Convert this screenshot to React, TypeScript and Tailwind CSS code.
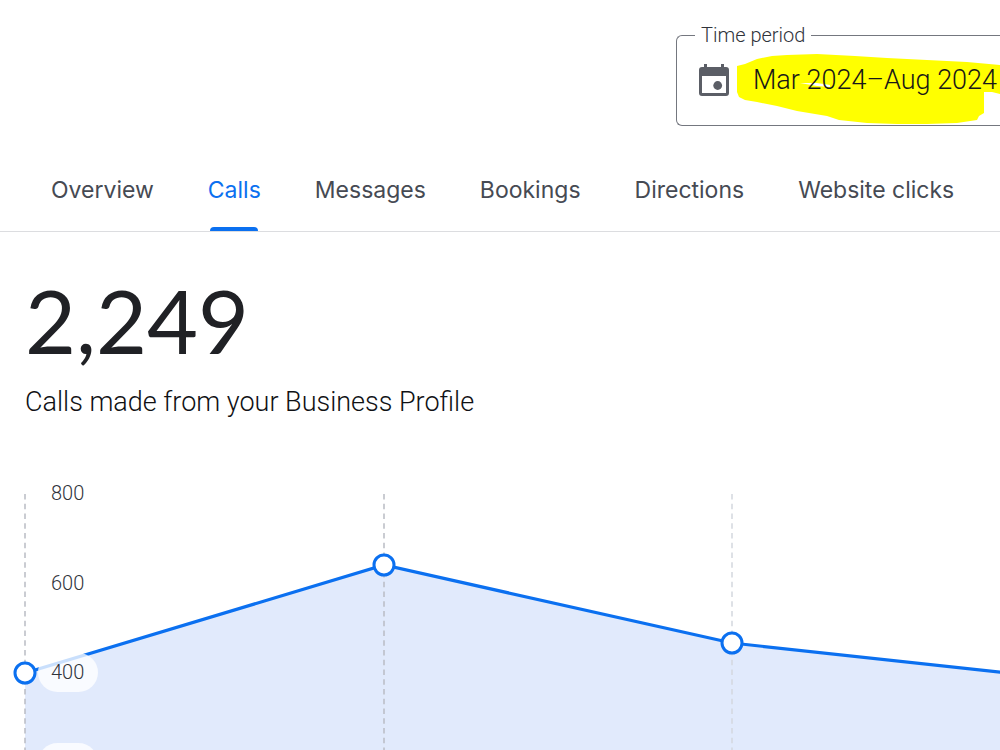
/**
 * Business Profile performance: calls view.
 *
 * Header with the time period picker, metric tabs, headline total and the
 * monthly calls chart.
 */
import { clsx } from "clsx"

interface Tab {
  label:   string
  active?: boolean
}

const TABS: Tab[] = [
  { label: "Overview" },
  { label: "Calls", active: true },
  { label: "Messages" },
  { label: "Bookings" },
  { label: "Directions" },
  { label: "Website clicks" },
]

function CalendarIcon() {
  return (
    <svg viewBox="0 0 30 34" className="h-[34px] w-[30px] shrink-0" aria-hidden="true">
      <path
        fill="#5b5e66"
        fillRule="evenodd"
        d="M5 1h3v3h14V1h3v3h2a3 3 0 0 1 3 3v23a3 3 0 0 1-3 3H3a3 3 0 0 1-3-3V7a3 3 0 0 1 3-3h2zM3 13v17h24V13z"
      />
      <circle cx="18.7" cy="22.5" r="4.4" fill="#5b5e66" />
    </svg>
  )
}

function Highlight() {
  return (
    <svg
      viewBox="0 0 263 70"
      className="pointer-events-none absolute left-[60px] top-[9px] h-[70px] w-[263px]"
      aria-hidden="true"
    >
      <path
        fill="#ffff00"
        d="M0 12 8 10 20 5 35 2 50 1 80 0 118 2 150 4 190 6 230 8 263 11V40L255 38 247 38 247 59 242 62 240 66 220 69 190 70 160 70 130 69 102 66 90 62 60 57 40 52 20 48 8 46 2 43 0 38z"
      />
      <path fill="#fff" d="M63 29 80 29 93 31 93 33 80 32z" />
    </svg>
  )
}

function TimePeriod() {
  return (
    <fieldset className="relative h-[101px] w-[324px] rounded-l-md border border-r-0 border-[#74777f] pl-[18px]">
      <legend className="px-1.5 text-[20px] leading-5 font-light text-[#30333b]">Time period</legend>
      <Highlight />
      <button
        type="button"
        className="relative flex items-center gap-6 whitespace-nowrap pl-1 pt-[18px] text-[27px] leading-8 font-light text-[#181818]"
      >
        <CalendarIcon />
        Mar 2024–Aug 2024
      </button>
    </fieldset>
  )
}

function MetricTabs() {
  return (
    <nav className="flex gap-[54px] overflow-hidden border-b border-[#dcdde0] pl-[51px]">
      {TABS.map((tab) => (
        <a
          key={tab.label}
          href="#"
          aria-current={tab.active ? "page" : undefined}
          className={clsx(
            "flex shrink-0 flex-col items-center font-['Inter'] text-[23px] leading-8",
            tab.active ? "text-[#0b70f0]" : "text-[#464a53]",
          )}
        >
          {tab.label}
          <span
            className={clsx(
              "mt-[21px] h-1 w-12 rounded-t",
              tab.active ? "bg-[#0b70f0]" : "bg-transparent",
            )}
          />
        </a>
      ))}
    </nav>
  )
}

// Chart coordinates, one point per month
const POINTS = [
  { x: 25,   y: 193, grid: "#b9bcc3" },
  { x: 384,  y: 85,  grid: "#b9bcc3" },
  { x: 732,  y: 163, grid: "#d3d7de" },
  { x: 1090, y: 202, grid: "#d3d7de" },
]

const AXIS = [
  { label: "800", y: 20 },
  { label: "600", y: 110 },
  { label: "400", y: 199 },
]

const LINE = POINTS.map((p) => `${p.x},${p.y}`).join(" ")

function CallsChart() {
  return (
    <svg
      viewBox="0 0 1000 270"
      className="block h-auto w-full"
      role="img"
      aria-label="Calls per month"
    >
      <polygon points={`25,270 ${LINE} 1090,270`} fill="#e1eafc" />
      {POINTS.map((p) => (
        <line
          key={p.x}
          x1={p.x}
          x2={p.x}
          y1="14"
          y2="270"
          stroke={p.grid}
          strokeWidth="1.5"
          strokeDasharray="5.5 4.25"
        />
      ))}
      <polyline points={LINE} fill="none" stroke="#0b70f0" strokeWidth="3.2" />

      {/* Pills keep the axis labels readable over the area */}
      <rect x="38" y="173" width="60" height="39" rx="19.5" fill="#fff" fillOpacity="0.78" />
      <rect x="38" y="263" width="60" height="39" rx="19.5" fill="#fff" fillOpacity="0.78" />

      {AXIS.map((tick) => (
        <text key={tick.label} x="51" y={tick.y} fontSize="20" fontWeight="300" fill="#30333b">
          {tick.label}
        </text>
      ))}
      {POINTS.map((p) => (
        <circle key={p.x} cx={p.x} cy={p.y} r="10" fill="#fff" stroke="#0b70f0" strokeWidth="3" />
      ))}
    </svg>
  )
}

export default function App() {
  return (
    <div className="min-h-screen overflow-hidden bg-white font-['Roboto',sans-serif]">
      <header className="flex justify-end pt-[25px]">
        <TimePeriod />
      </header>

      <div className="pt-12">
        <MetricTabs />
      </div>

      <main>
        <section className="px-[25px] pt-10">
          <h1 className="font-['Lato'] text-[88px] leading-[96px] text-[#202125]">2,249</h1>
          <p className="pt-[18px] text-[27px] leading-8 font-light text-[#101114]">
            Calls made from your Business Profile
          </p>
        </section>
        <div className="pt-[62px]">
          <CallsChart />
        </div>
      </main>
    </div>
  )
}
